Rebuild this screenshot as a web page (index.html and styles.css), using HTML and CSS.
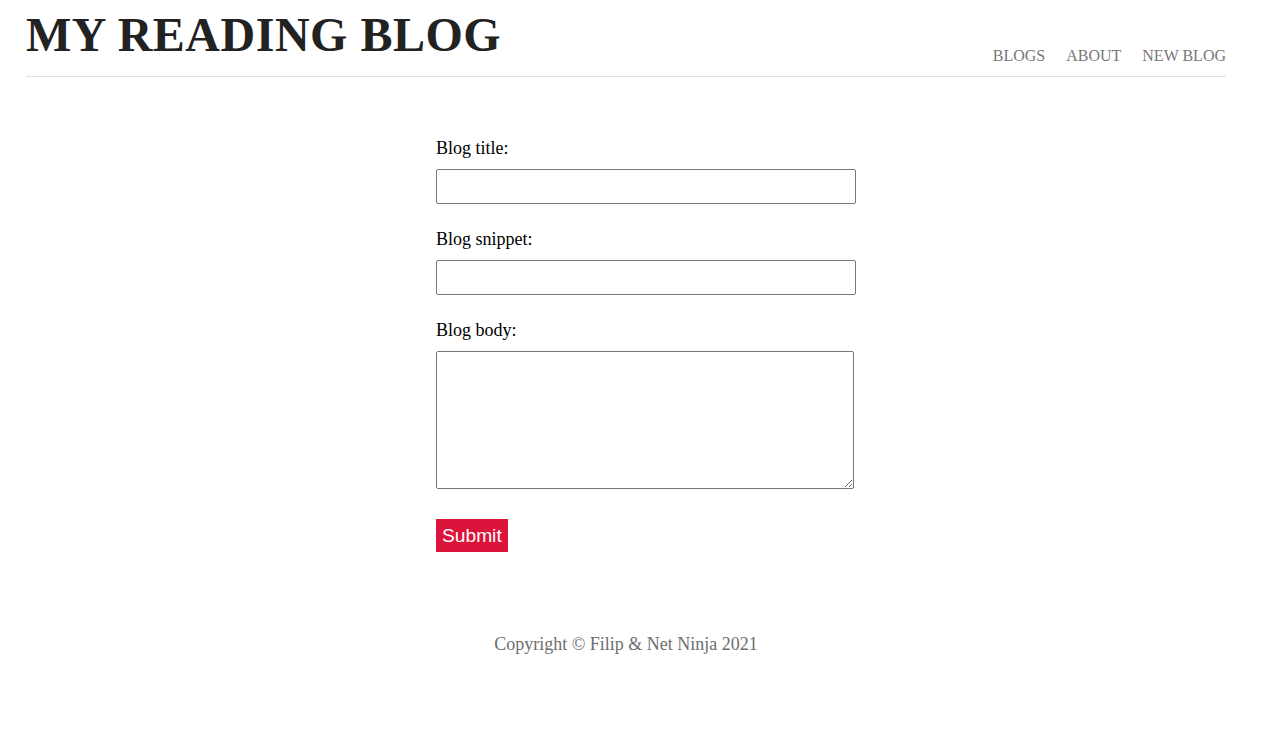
FILE: index.html
```html
<!DOCTYPE html>
<html lang="en">
<head>
<meta charset="utf-8">
<title>My Reading Blog</title>
<link rel="stylesheet" href="styles.css">
</head>
<body>
<div class="page">
  <header class="site-header">
    <h1 class="logo">MY READING BLOG</h1>
    <nav class="nav">
      <a href="#">BLOGS</a>
      <a href="#">ABOUT</a>
      <a href="#">NEW BLOG</a>
    </nav>
  </header>
  <main class="content">
    <form class="blog-form">
      <label class="field-label" for="title">Blog title:</label>
      <input class="field-input" id="title" type="text">
      <label class="field-label" for="snippet">Blog snippet:</label>
      <input class="field-input" id="snippet" type="text">
      <label class="field-label" for="body">Blog body:</label>
      <textarea class="field-textarea" id="body"></textarea>
      <button class="submit-btn" type="button">Submit</button>
    </form>
  </main>
  <footer class="site-footer">Copyright © Filip &amp; Net Ninja 2021</footer>
</div>
</body>
</html>
```
FILE: styles.css
```css
html, body {
  margin: 0;
  padding: 0;
  background: #fff;
}
body {
  font-family: "Liberation Serif", "Times New Roman", serif;
  color: #000;
}
.page {
  width: 1200px;
  margin-left: 26px;
}
.site-header {
  display: flex;
  justify-content: space-between;
  align-items: flex-start;
  padding-top: 11px;
  padding-bottom: 10px;
  border-bottom: 1px solid #e0e0e0;
}
.logo {
  margin: 0;
  font-size: 48px;
  line-height: 48px;
  letter-spacing: 0.5px;
  font-weight: bold;
  color: #222;
}
.nav {
  display: flex;
  gap: 21px;
  margin-top: 35px;
  line-height: 20px;
}
.nav a {
  font-size: 16px;
  color: #777;
  text-decoration: none;
}
.content {
  padding-top: 60px;
}
.blog-form {
  margin-left: 410px;
  width: 420px;
}
.field-label {
  display: block;
  font-size: 18px;
  line-height: 22px;
  margin-bottom: 10px;
}
.field-input {
  display: block;
  box-sizing: border-box;
  width: 420px;
  height: 35px;
  margin: 0 0 24px 0;
  border: 1px solid #767676;
  border-radius: 2px;
  padding: 4px 6px;
  font-size: 16px;
}
.field-textarea {
  display: block;
  box-sizing: border-box;
  width: 418px;
  height: 138px;
  margin: 0 0 30px 0;
  border: 1px solid #767676;
  border-radius: 2px;
  padding: 4px;
}
.submit-btn {
  display: block;
  height: 33px;
  padding: 0 6px;
  border: none;
  background: #dc143c;
  color: #fff;
  font-family: "Liberation Sans", Arial, sans-serif;
  font-size: 19.2px;
  cursor: pointer;
}
.site-footer {
  margin-top: 81px;
  text-align: center;
  font-size: 18px;
  line-height: 22px;
  color: #6e6e6e;
}
```
